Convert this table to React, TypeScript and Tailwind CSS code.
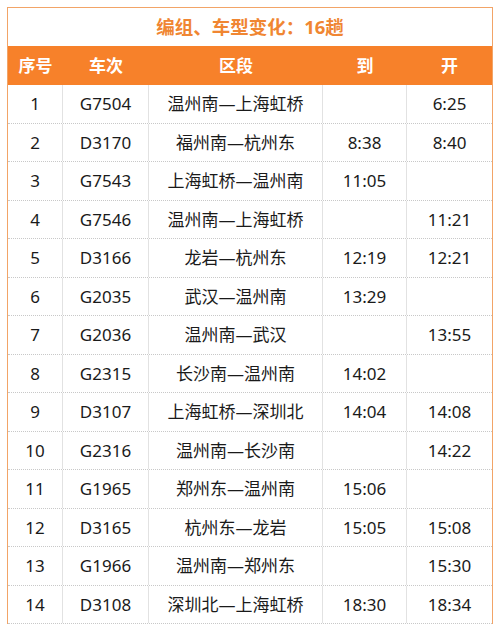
const rows: [string, string, string, string, string][] = [
  ["1", "G7504", "温州南—上海虹桥", "", "6:25"],
  ["2", "D3170", "福州南—杭州东", "8:38", "8:40"],
  ["3", "G7543", "上海虹桥—温州南", "11:05", ""],
  ["4", "G7546", "温州南—上海虹桥", "", "11:21"],
  ["5", "D3166", "龙岩—杭州东", "12:19", "12:21"],
  ["6", "G2035", "武汉—温州南", "13:29", ""],
  ["7", "G2036", "温州南—武汉", "", "13:55"],
  ["8", "G2315", "长沙南—温州南", "14:02", ""],
  ["9", "D3107", "上海虹桥—深圳北", "14:04", "14:08"],
  ["10", "G2316", "温州南—长沙南", "", "14:22"],
  ["11", "G1965", "郑州东—温州南", "15:06", ""],
  ["12", "D3165", "杭州东—龙岩", "15:05", "15:08"],
  ["13", "G1966", "温州南—郑州东", "", "15:30"],
  ["14", "D3108", "深圳北—上海虹桥", "18:30", "18:34"],
];

const cols = "grid grid-cols-[55px_86px_174px_84px_85px]";
const headers = ["序号", "车次", "区段", "到", "开"];

function Section({ text }: { text: string }) {
  const [a, b] = text.split("—");
  return (
    <span className="whitespace-nowrap">
      {a}
      <span className="[font-feature-settings:'fwid']">—</span>
      {b}
    </span>
  );
}

export default function App() {
  return (
    <div
      className="w-[500px] h-[624px] overflow-hidden bg-white pt-[7px] pl-[7px]"
      style={{ fontFamily: '"Noto Sans", "Noto Sans CJK SC", sans-serif' }}
    >
      <div className="w-[486px] border border-[#f2a467] border-b-0">
        <div className="h-[38px] flex items-center justify-center text-[18.5px] font-bold text-[#f08632]">
          编组、车型变化：16趟
        </div>
        <div className={`${cols} h-[39px] bg-[#f7812a] text-white text-[17px] font-bold`}>
          {headers.map((h) => (
            <div key={h} className="flex items-center justify-center">
              {h}
            </div>
          ))}
        </div>
        {rows.map((r) => (
          <div
            key={r[0]}
            className={`${cols} h-[38.5px] border-b border-dotted border-[#c8c8c8] text-[17px] text-[#1a1a1a]`}
          >
            {r.map((c, i) => (
              <div
                key={i}
                className={`flex items-center justify-center ${i < 4 ? "border-r border-[#e2e2e2]" : ""}`}
              >
                {i === 2 ? <Section text={c} /> : c}
              </div>
            ))}
          </div>
        ))}
      </div>
    </div>
  );
}
